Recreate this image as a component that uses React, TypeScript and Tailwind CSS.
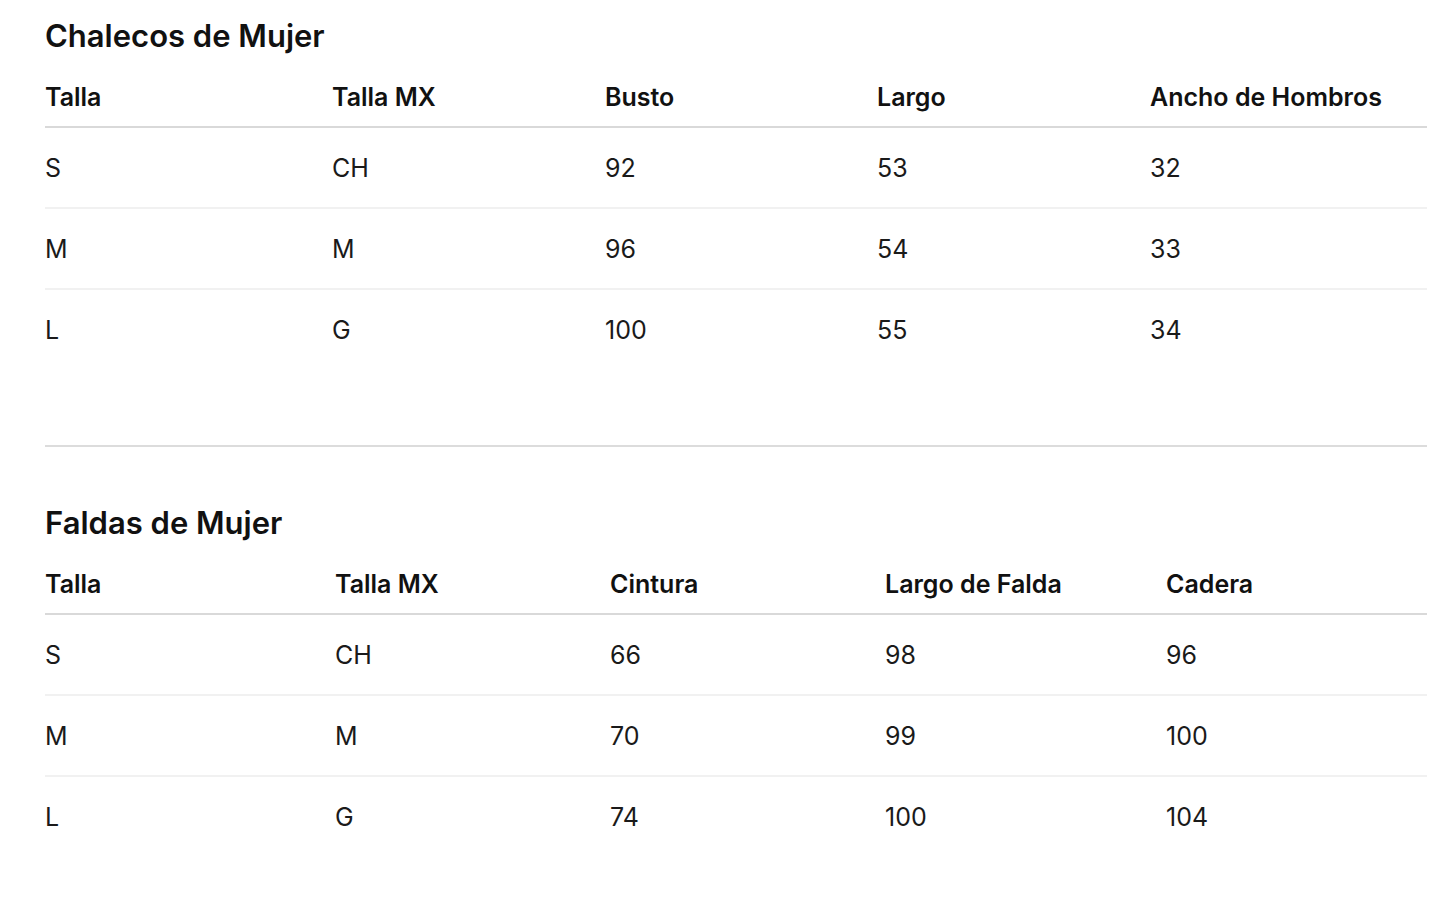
import React from 'react';

type Tabla = {
  titulo: string;
  columnas: string[];
  anchos: string[];
  filas: string[][];
};

const tablas: Tabla[] = [
  {
    titulo: 'Chalecos de Mujer',
    columnas: ['Talla', 'Talla MX', 'Busto', 'Largo', 'Ancho de Hombros'],
    anchos: ['w-[287px]', 'w-[273px]', 'w-[272px]', 'w-[273px]', ''],
    filas: [
      ['S', 'CH', '92', '53', '32'],
      ['M', 'M', '96', '54', '33'],
      ['L', 'G', '100', '55', '34'],
    ],
  },
  {
    titulo: 'Faldas de Mujer',
    columnas: ['Talla', 'Talla MX', 'Cintura', 'Largo de Falda', 'Cadera'],
    anchos: ['w-[290px]', 'w-[275px]', 'w-[275px]', 'w-[281px]', ''],
    filas: [
      ['S', 'CH', '66', '98', '96'],
      ['M', 'M', '70', '99', '100'],
      ['L', 'G', '74', '100', '104'],
    ],
  },
];

const TablaTallas: React.FC<{ tabla: Tabla }> = ({ tabla }) => (
  <section>
    <h2 className="text-[31px] leading-[36px] font-semibold text-[#111]">{tabla.titulo}</h2>
    <table className="w-full mt-[13px] border-collapse text-left table-fixed">
      <colgroup>
        {tabla.anchos.map((w, i) => (
          <col key={i} className={w} />
        ))}
      </colgroup>
      <thead>
        <tr className="border-b-2 border-[#d9d9d9]">
          {tabla.columnas.map((col) => (
            <th key={col} className="h-[60px] p-0 text-[25px] leading-[30px] font-semibold text-[#111] whitespace-nowrap">
              {col}
            </th>
          ))}
        </tr>
      </thead>
      <tbody>
        {tabla.filas.map((fila, i) => (
          <tr
            key={fila[0]}
            className={i < tabla.filas.length - 1 ? 'border-b-2 border-[#f1f1f1]' : ''}
          >
            {fila.map((celda, j) => (
              <td key={j} className="h-[81px] p-0 text-[25px] leading-[30px] text-[#1a1a1a]">
                {celda}
              </td>
            ))}
          </tr>
        ))}
      </tbody>
    </table>
  </section>
);

export default function App() {
  return (
    <div className="min-h-screen bg-white pl-[45px] pr-[18px] pt-[18px] font-['Inter',sans-serif]">
      <TablaTallas tabla={tablas[0]} />
      <hr className="mt-[75px] mb-[58px] border-0 border-t-2 border-[#dcdcdc]" />
      <TablaTallas tabla={tablas[1]} />
    </div>
  );
}
